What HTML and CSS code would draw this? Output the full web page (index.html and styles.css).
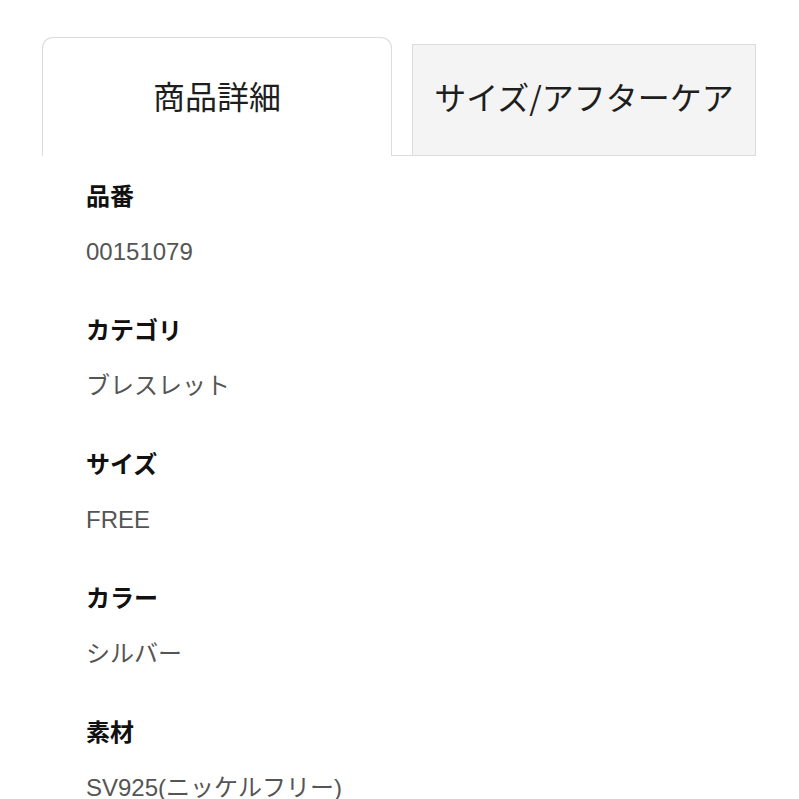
FILE: index.html
```html
<!DOCTYPE html>
<html lang="ja">
<head>
<meta charset="utf-8">
<link rel="stylesheet" href="styles.css">
</head>
<body>
<div class="page">
  <div class="tabs">
    <div class="tab tab-active">商品詳細</div>
    <div class="tab-gap"></div>
    <div class="tab tab-inactive">サイズ/アフターケア</div>
  </div>
  <dl class="specs">
    <div class="spec">
      <dt class="label">品番</dt>
      <dd class="value">00151079</dd>
    </div>
    <div class="spec">
      <dt class="label">カテゴリ</dt>
      <dd class="value">ブレスレット</dd>
    </div>
    <div class="spec">
      <dt class="label">サイズ</dt>
      <dd class="value">FREE</dd>
    </div>
    <div class="spec">
      <dt class="label">カラー</dt>
      <dd class="value">シルバー</dd>
    </div>
    <div class="spec">
      <dt class="label">素材</dt>
      <dd class="value">SV925(ニッケルフリー)</dd>
    </div>
  </dl>
</div>
</body>
</html>
```

FILE: styles.css
```css
html, body {
  margin: 0;
  padding: 0;
  background: #ffffff;
}

body {
  font-family: "Liberation Sans", "Noto Sans CJK JP", sans-serif;
  color: #222;
}

.page {
  padding: 37px 0 0 42px;
  width: 714px;
}

.tabs {
  display: flex;
  align-items: flex-end;
  height: 119px;
}

.tab {
  box-sizing: border-box;
  display: flex;
  align-items: center;
  justify-content: center;
  font-family: "Noto Sans CJK JP", sans-serif;
  font-size: 32px;
  color: #1e1e1e;
}

.tab-active {
  width: 350px;
  height: 119px;
  border: 1px solid #dcdcdc;
  border-bottom: none;
  border-radius: 11px 11px 0 0;
  background: #fff;
  padding-bottom: 4px;
}

.tab-gap {
  width: 20px;
  height: 0;
  border-bottom: 1px solid #dcdcdc;
}

.tab-inactive {
  width: 344px;
  height: 112px;
  border: 1px solid #dcdcdc;
  background: #f4f4f4;
  padding-bottom: 9px;
}

.specs {
  margin: 0;
  padding: 22px 0 0 44px;
}

.spec {
  margin: 0 0 43px;
}

.label {
  margin: 0;
  font-size: 24px;
  line-height: 34px;
  font-weight: bold;
  color: #111;
  font-family: "Noto Sans CJK JP", sans-serif;
}

.value {
  margin: 23px 0 0;
  font-size: 24px;
  line-height: 34px;
  color: #555;
}
```
